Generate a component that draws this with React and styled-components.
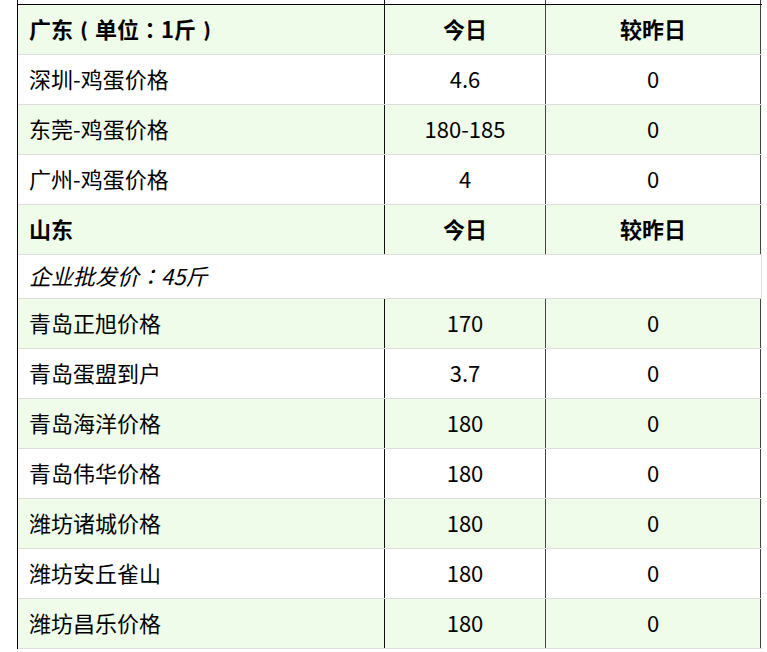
import React from 'react';
import styled, { createGlobalStyle } from 'styled-components';

const GlobalStyle = createGlobalStyle`
  html, body {
    margin: 0;
    padding: 0;
    background: #ffffff;
  }
  body {
    font-family: "Noto Sans CJK SC", "Noto Sans", sans-serif;
    color: #000000;
  }
`;

// 表格外框
const Table = styled.div`
  margin-left: 17px;
  width: 745px;
  border-left: 1px solid #000000;
  box-sizing: border-box;
  font-size: 22px;
`;

// 一行：三列
const Row = styled.div`
  display: grid;
  grid-template-columns: 367px 161px 215px;
  height: ${(p) => p.$h || 50}px;
  box-sizing: border-box;
  border-bottom: 1px solid ${(p) => p.$line || '#dddddd'};
  background: ${(p) => (p.$green ? '#f0fcea' : '#ffffff')};
`;

const Cell = styled.div`
  display: flex;
  align-items: center;
  justify-content: ${(p) => (p.$center ? 'center' : 'flex-start')};
  padding-left: ${(p) => (p.$center ? 0 : 11)}px;
  padding-bottom: 3px;
  line-height: 1;
  box-sizing: border-box;
  font-weight: ${(p) => (p.$bold ? 700 : 400)};
  border-right: 1px solid ${(p) => p.$edge};
  white-space: nowrap;
`;

// 全角冒号居中
const Punct = styled.span`
  font-family: "Noto Sans CJK JP", "Noto Sans CJK SC", sans-serif;
`;

// 括号：占一个字宽，居中显示
const Bracket = styled.span`
  display: inline-block;
  width: 22px;
  text-align: center;
  font-size: 19px;
  font-weight: 800;
  vertical-align: 1px;
`;

// 整行合并的说明行
const NoteRow = styled.div`
  height: 44px;
  box-sizing: border-box;
  display: flex;
  align-items: center;
  padding: 0 0 3px 11px;
  line-height: 1;
  font-style: italic;
  background: #ffffff;
  border-bottom: 1px solid #dddddd;
  border-right: 1px solid #dddddd;
`;

const COL1 = '#111111';
const COL2 = '#444444';
const COL3 = '#444444';

function Line({ name, today, diff, head, green }) {
  return (
    <Row $green={green}>
      <Cell $edge={COL1} $bold={head}>{name}</Cell>
      <Cell $edge={COL2} $bold={head} $center>{today}</Cell>
      <Cell $edge={COL3} $bold={head} $center>{diff}</Cell>
    </Row>
  );
}

const guangdong = [
  { name: '深圳-鸡蛋价格', today: '4.6', diff: '0' },
  { name: '东莞-鸡蛋价格', today: '180-185', diff: '0' },
  { name: '广州-鸡蛋价格', today: '4', diff: '0' },
];

const shandong = [
  { name: '青岛正旭价格', today: '170', diff: '0' },
  { name: '青岛蛋盟到户', today: '3.7', diff: '0' },
  { name: '青岛海洋价格', today: '180', diff: '0' },
  { name: '青岛伟华价格', today: '180', diff: '0' },
  { name: '潍坊诸城价格', today: '180', diff: '0' },
  { name: '潍坊安丘雀山', today: '180', diff: '0' },
  { name: '潍坊昌乐价格', today: '180', diff: '0' },
];

export default function App() {
  return (
    <>
      <GlobalStyle />
      <Table>
        {/* 上一张表格的末尾 */}
        <Row $h={5} $line="#000000">
          <Cell $edge={COL1} />
          <Cell $edge={COL2} />
          <Cell $edge={COL3} />
        </Row>
        <Line
          head
          green
          name={
            <>
              广东<Bracket>(</Bracket>单位<Punct>：</Punct>1斤<Bracket>)</Bracket>
            </>
          }
          today="今日"
          diff="较昨日"
        />
        {guangdong.map((r, i) => (
          <Line key={r.name} {...r} green={i % 2 === 1} />
        ))}
        <Line head green name="山东" today="今日" diff="较昨日" />
        <NoteRow>企业批发价<Punct>：</Punct>45斤</NoteRow>
        {shandong.map((r, i) => (
          <Line key={r.name} {...r} green={i % 2 === 0} />
        ))}
      </Table>
    </>
  );
}
